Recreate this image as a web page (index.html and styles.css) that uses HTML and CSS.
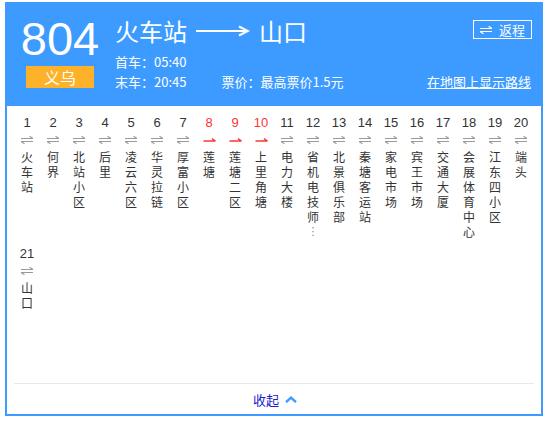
FILE: index.html
```html
<!DOCTYPE html>
<html lang="zh-CN">
<head>
<meta charset="utf-8">
<title>804路 火车站—山口</title>
<link rel="stylesheet" href="styles.css">
</head>
<body>
<div class="card">
  <header class="head">
    <div class="line-id">
      <div class="line-no">804</div>
      <div class="city">义乌</div>
    </div>
    <div class="info">
      <div class="route-row">
        <div class="route">
          <span>火车站</span>
          <svg class="long-arrow" width="54" height="12" viewBox="0 0 54 12"><path d="M0 6H52" stroke="#fff" stroke-width="2" fill="none"/><path d="M43 1.5L52 6L43 10.5" stroke="#fff" stroke-width="2" fill="none"/></svg>
          <span>山口</span>
        </div>
        <button class="reverse" type="button">
          <svg width="12" height="8" viewBox="0 0 12 8"><path d="M0 2.5H12M12 2.5L8.5 0.3M0 5.5H12M0 5.5L3.5 7.7" stroke="#fff" stroke-width="1.2" fill="none"/></svg>
          <span>返程</span>
        </button>
      </div>
      <div class="times">
        <div>首车：05:40</div>
        <div class="times-row">
          <span>末车：20:45</span>
          <span class="fare">票价：最高票价1.5元</span>
          <a class="map-link" href="#">在地图上显示路线</a>
        </div>
      </div>
    </div>
  </header>

  <ol class="stops">
    <li class="stop"><span class="num">1</span><svg class="dir" viewBox="0 0 12 8"><path d="M0 2.5H12M12 2.5L8.5 0.3M0 5.5H12M0 5.5L3.5 7.7"/></svg><span class="name">火车站</span></li>
    <li class="stop"><span class="num">2</span><svg class="dir" viewBox="0 0 12 8"><path d="M0 2.5H12M12 2.5L8.5 0.3M0 5.5H12M0 5.5L3.5 7.7"/></svg><span class="name">何界</span></li>
    <li class="stop"><span class="num">3</span><svg class="dir" viewBox="0 0 12 8"><path d="M0 2.5H12M12 2.5L8.5 0.3M0 5.5H12M0 5.5L3.5 7.7"/></svg><span class="name">北站小区</span></li>
    <li class="stop"><span class="num">4</span><svg class="dir" viewBox="0 0 12 8"><path d="M0 2.5H12M12 2.5L8.5 0.3M0 5.5H12M0 5.5L3.5 7.7"/></svg><span class="name">后里</span></li>
    <li class="stop"><span class="num">5</span><svg class="dir" viewBox="0 0 12 8"><path d="M0 2.5H12M12 2.5L8.5 0.3M0 5.5H12M0 5.5L3.5 7.7"/></svg><span class="name">凌云六区</span></li>
    <li class="stop"><span class="num">6</span><svg class="dir" viewBox="0 0 12 8"><path d="M0 2.5H12M12 2.5L8.5 0.3M0 5.5H12M0 5.5L3.5 7.7"/></svg><span class="name">华灵拉链</span></li>
    <li class="stop"><span class="num">7</span><svg class="dir" viewBox="0 0 12 8"><path d="M0 2.5H12M12 2.5L8.5 0.3M0 5.5H12M0 5.5L3.5 7.7"/></svg><span class="name">厚富小区</span></li>
    <li class="stop one-way"><span class="num">8</span><svg class="dir" viewBox="0 0 12 8"><path d="M0 5H12M12 5L8.5 2.6"/></svg><span class="name">莲塘</span></li>
    <li class="stop one-way"><span class="num">9</span><svg class="dir" viewBox="0 0 12 8"><path d="M0 5H12M12 5L8.5 2.6"/></svg><span class="name">莲塘二区</span></li>
    <li class="stop one-way"><span class="num">10</span><svg class="dir" viewBox="0 0 12 8"><path d="M0 5H12M12 5L8.5 2.6"/></svg><span class="name">上里角塘</span></li>
    <li class="stop"><span class="num">11</span><svg class="dir" viewBox="0 0 12 8"><path d="M0 2.5H12M12 2.5L8.5 0.3M0 5.5H12M0 5.5L3.5 7.7"/></svg><span class="name">电力大楼</span></li>
    <li class="stop"><span class="num">12</span><svg class="dir" viewBox="0 0 12 8"><path d="M0 2.5H12M12 2.5L8.5 0.3M0 5.5H12M0 5.5L3.5 7.7"/></svg><span class="name" title="省机电技师学院">省机电技师</span><span class="more">⋮</span></li>
    <li class="stop"><span class="num">13</span><svg class="dir" viewBox="0 0 12 8"><path d="M0 2.5H12M12 2.5L8.5 0.3M0 5.5H12M0 5.5L3.5 7.7"/></svg><span class="name">北景俱乐部</span></li>
    <li class="stop"><span class="num">14</span><svg class="dir" viewBox="0 0 12 8"><path d="M0 2.5H12M12 2.5L8.5 0.3M0 5.5H12M0 5.5L3.5 7.7"/></svg><span class="name">秦塘客运站</span></li>
    <li class="stop"><span class="num">15</span><svg class="dir" viewBox="0 0 12 8"><path d="M0 2.5H12M12 2.5L8.5 0.3M0 5.5H12M0 5.5L3.5 7.7"/></svg><span class="name">家电市场</span></li>
    <li class="stop"><span class="num">16</span><svg class="dir" viewBox="0 0 12 8"><path d="M0 2.5H12M12 2.5L8.5 0.3M0 5.5H12M0 5.5L3.5 7.7"/></svg><span class="name">宾王市场</span></li>
    <li class="stop"><span class="num">17</span><svg class="dir" viewBox="0 0 12 8"><path d="M0 2.5H12M12 2.5L8.5 0.3M0 5.5H12M0 5.5L3.5 7.7"/></svg><span class="name">交通大厦</span></li>
    <li class="stop"><span class="num">18</span><svg class="dir" viewBox="0 0 12 8"><path d="M0 2.5H12M12 2.5L8.5 0.3M0 5.5H12M0 5.5L3.5 7.7"/></svg><span class="name">会展体育中心</span></li>
    <li class="stop"><span class="num">19</span><svg class="dir" viewBox="0 0 12 8"><path d="M0 2.5H12M12 2.5L8.5 0.3M0 5.5H12M0 5.5L3.5 7.7"/></svg><span class="name">江东四小区</span></li>
    <li class="stop"><span class="num">20</span><svg class="dir" viewBox="0 0 12 8"><path d="M0 2.5H12M12 2.5L8.5 0.3M0 5.5H12M0 5.5L3.5 7.7"/></svg><span class="name">端头</span></li>
    <li class="stop"><span class="num">21</span><svg class="dir" viewBox="0 0 12 8"><path d="M0 2.5H12M12 2.5L8.5 0.3M0 5.5H12M0 5.5L3.5 7.7"/></svg><span class="name">山口</span></li>
  </ol>

  <footer class="foot">
    <a class="collapse" href="#">收起</a>
    <svg class="chevron" width="12" height="7" viewBox="0 0 12 7"><path d="M1 6.2L6 1.6L11 6.2" stroke="#3d9bff" stroke-width="2.4" fill="none"/></svg>
  </footer>
</div>
</body>
</html>
```

FILE: styles.css
```css
* {
  box-sizing: border-box;
}

html,
body {
  margin: 0;
  padding: 0;
  background: #fff;
}

body {
  font-family: "Noto Sans CJK SC", "Liberation Sans", sans-serif;
  color: #333;
}

/* outer frame */
.card {
  margin: 2px 0 0 5px;
  width: 538px;
  height: 414px;
  border: 2px solid #3d9bff;
  display: flex;
  flex-direction: column;
}

/* blue header with line number and route info */
.head {
  height: 102px;
  flex: none;
  background: #3d9bff;
  color: #fff;
  display: flex;
  padding: 11px 9px 0 15px;
}

.line-id {
  width: 76px;
  margin-right: 17px;
  display: flex;
  flex-direction: column;
  align-items: center;
}

.line-no {
  font-family: "Liberation Sans", sans-serif;
  font-size: 47px;
  line-height: 47px;
}

.city {
  margin-top: 4px;
  width: 68px;
  height: 22px;
  background: #feb22a;
  font-size: 16px;
  line-height: 22px;
  text-align: center;
}

.info {
  flex: 1;
  display: flex;
  flex-direction: column;
}

.route-row {
  display: flex;
  justify-content: space-between;
  align-items: flex-start;
  height: 32px;
}

.route {
  display: flex;
  align-items: center;
  font-size: 24px;
  line-height: 32px;
}

.long-arrow {
  margin: 0 9px 0 9px;
}

.reverse {
  margin-top: 5px;
  height: 19px;
  border: 1px solid #fff;
  background: transparent;
  color: #fff;
  padding: 0 6px 0 6px;
  font-family: inherit;
  font-size: 13px;
  line-height: 17px;
  display: flex;
  align-items: center;
  gap: 7px;
}

.times {
  margin-top: 5px;
  font-size: 13px;
  line-height: 20px;
}

.times-row {
  display: flex;
}

.fare {
  margin-left: 35px;
}

.map-link {
  margin-left: auto;
  margin-right: 1px;
  color: #fff;
  text-decoration: underline;
}

/* station list */
.stops {
  flex: 1;
  margin: 0;
  list-style: none;
  padding: 9px 7px 0 7px;
  display: flex;
  flex-wrap: wrap;
  align-content: flex-start;
  row-gap: 7px;
}

.stop {
  width: 26px;
  display: flex;
  flex-direction: column;
  align-items: center;
}

.num {
  font-family: "Liberation Sans", sans-serif;
  font-size: 13px;
  line-height: 16px;
  color: #333;
}

.dir {
  margin-top: 5px;
  width: 12px;
  height: 8px;
  fill: none;
  stroke: #999;
  stroke-width: 1.1;
}

.one-way .num {
  color: #f33;
}

.one-way .dir {
  stroke: #f33;
  stroke-width: 1.3;
  width: 13px;
}

.name {
  margin-top: 5px;
  width: 13px;
  font-size: 12px;
  line-height: 15px;
  color: #333;
  text-align: center;
  word-break: break-all;
}

/* vertical ellipsis under a truncated name */
.more {
  margin-top: 1px;
  font-family: "DejaVu Sans", sans-serif;
  font-size: 11px;
  line-height: 13px;
  color: #888;
}

/* collapse bar */
.foot {
  flex: none;
  height: 31px;
  margin: 0 7px;
  border-top: 1px solid #e8e8e8;
  display: flex;
  justify-content: center;
  align-items: center;
  gap: 6px;
  padding-left: 2px;
}

.collapse {
  font-size: 13px;
  color: #1c1cc9;
  text-decoration: none;
}
```
